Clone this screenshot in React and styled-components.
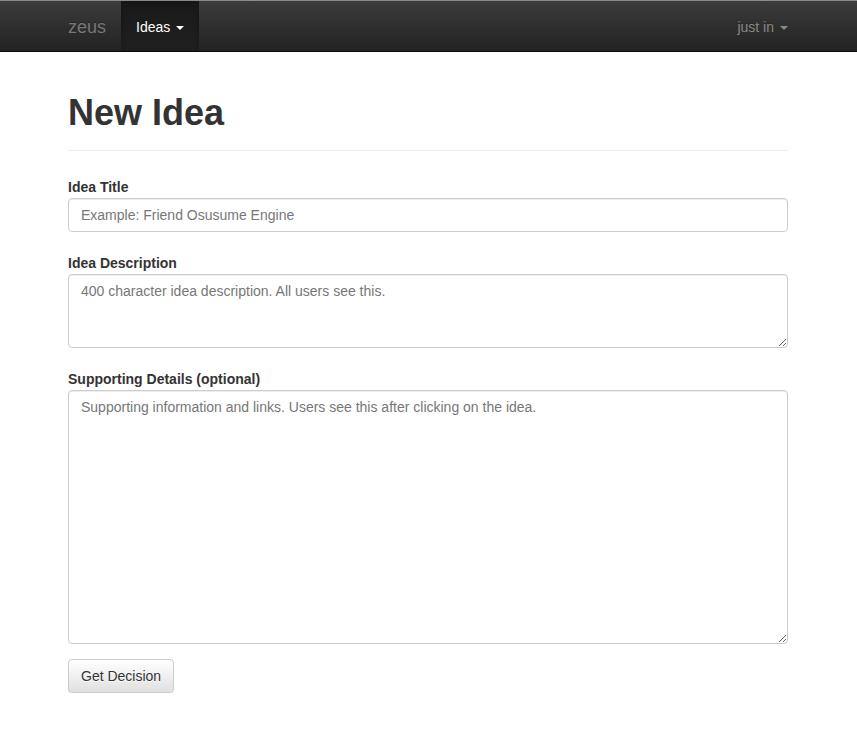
import React from "react";
import styled, { createGlobalStyle } from "styled-components";

const Global = createGlobalStyle`
  * { box-sizing: border-box; }
  body {
    margin: 0;
    font-family: "Liberation Sans", Arial, sans-serif;
    font-size: 14px;
    line-height: 1.42857;
    color: #333;
    background: #fff;
  }
`;

const Navbar = styled.nav`
  height: 52px;
  border-top: 1px solid #8a8a8a;
  border-bottom: 1px solid #080808;
  background: linear-gradient(to bottom, #3c3c3c 0%, #222 100%);
`;

const NavInner = styled.div`
  width: 750px;
  margin-left: calc((100% - 751px) / 2);
  padding: 0 15px;
  height: 100%;
  display: flex;
  align-items: stretch;
`;

const Brand = styled.a`
  display: flex;
  align-items: center;
  padding: 3px 15px 0 0;
  font-size: 18px;
  color: #777;
  text-decoration: none;
  text-shadow: 0 -1px 0 rgba(0, 0, 0, 0.25);
`;

const NavItem = styled.a`
  display: flex;
  align-items: center;
  padding: 3px 15px 0;
  color: ${(p) => (p.$active ? "#fff" : "#8a8a8a")};
  text-decoration: none;
  font-size: 14px;
  text-shadow: 0 -1px 0 rgba(0, 0, 0, 0.25);
  background: ${(p) =>
    p.$active ? "linear-gradient(to bottom, #1a1a1a 0%, #202020 100%)" : "transparent"};
  box-shadow: ${(p) => (p.$active ? "inset 0 3px 9px rgba(0,0,0,0.25)" : "none")};
  margin-left: ${(p) => (p.$right ? "auto" : "0")};
  margin-right: ${(p) => (p.$right ? "-15px" : "0")};
`;

const Caret = styled.span`
  display: inline-block;
  width: 0;
  height: 0;
  margin-left: 6px;
  border-top: 4px solid currentColor;
  border-left: 4px solid transparent;
  border-right: 4px solid transparent;
  vertical-align: middle;
`;

const Container = styled.main`
  width: 750px;
  margin-left: calc((100% - 751px) / 2);
  padding: 0 15px;
`;

const PageHeader = styled.div`
  margin: 41px 0 20px;
  padding-bottom: 7px;
  border-bottom: 1px solid #eee;
`;

const Title = styled.h1`
  margin: 0 0 10px;
  font-size: 36px;
  font-weight: bold;
  line-height: 1.1;
  font-family: "Liberation Sans", Arial, sans-serif;
  color: #333;
`;

const FormGroup = styled.div`
  margin-bottom: 15px;
  display: flex;
  flex-direction: column;
`;

const Label = styled.label`
  font-weight: bold;
  font-size: 14px;
  line-height: 20px;
  padding-top: 6px;
  margin-bottom: 1px;
`;

const Input = styled.input`
  display: block;
  width: 100%;
  height: 34px;
  padding: 6px 12px;
  font-size: 14px;
  font-family: inherit;
  color: #555;
  background: #fff;
  border: 1px solid #ccc;
  border-radius: 4px;
  box-shadow: inset 0 1px 1px rgba(0, 0, 0, 0.075);
  &::placeholder { color: #777; opacity: 1; }
`;

const TextArea = styled.textarea`
  display: block;
  width: 100%;
  height: ${(p) => p.$h}px;
  padding: 6px 12px;
  font-size: 14px;
  line-height: 20px;
  font-family: inherit;
  color: #555;
  background: #fff;
  border: 1px solid #ccc;
  border-radius: 4px;
  box-shadow: inset 0 1px 1px rgba(0, 0, 0, 0.075);
  resize: vertical;
  &::placeholder { color: #777; opacity: 1; }
`;

const Button = styled.button`
  display: inline-block;
  height: 34px;
  padding: 6px 12px;
  font-size: 14px;
  font-family: inherit;
  color: #333;
  border: 1px solid #ccc;
  border-radius: 4px;
  background: linear-gradient(to bottom, #fff 0%, #e0e0e0 100%);
  text-shadow: 0 1px 0 #fff;
  box-shadow: inset 0 1px 0 rgba(255, 255, 255, 0.15), 0 1px 1px rgba(0, 0, 0, 0.075);
  cursor: pointer;
`;

export default function App() {
  return (
    <>
      <Global />
      <Navbar>
        <NavInner>
          <Brand href="#">zeus</Brand>
          <NavItem href="#" $active>
            Ideas <Caret />
          </NavItem>
          <NavItem href="#" $right>
            just in <Caret />
          </NavItem>
        </NavInner>
      </Navbar>
      <Container>
        <PageHeader>
          <Title>New Idea</Title>
        </PageHeader>
        <form onSubmit={(e) => e.preventDefault()}>
          <FormGroup>
            <Label>Idea Title</Label>
            <Input placeholder="Example: Friend Osusume Engine" />
          </FormGroup>
          <FormGroup>
            <Label>Idea Description</Label>
            <TextArea $h={74} placeholder="400 character idea description. All users see this." />
          </FormGroup>
          <FormGroup>
            <Label>Supporting Details (optional)</Label>
            <TextArea
              $h={254}
              placeholder="Supporting information and links. Users see this after clicking on the idea."
            />
          </FormGroup>
          <Button type="submit">Get Decision</Button>
        </form>
      </Container>
    </>
  );
}
